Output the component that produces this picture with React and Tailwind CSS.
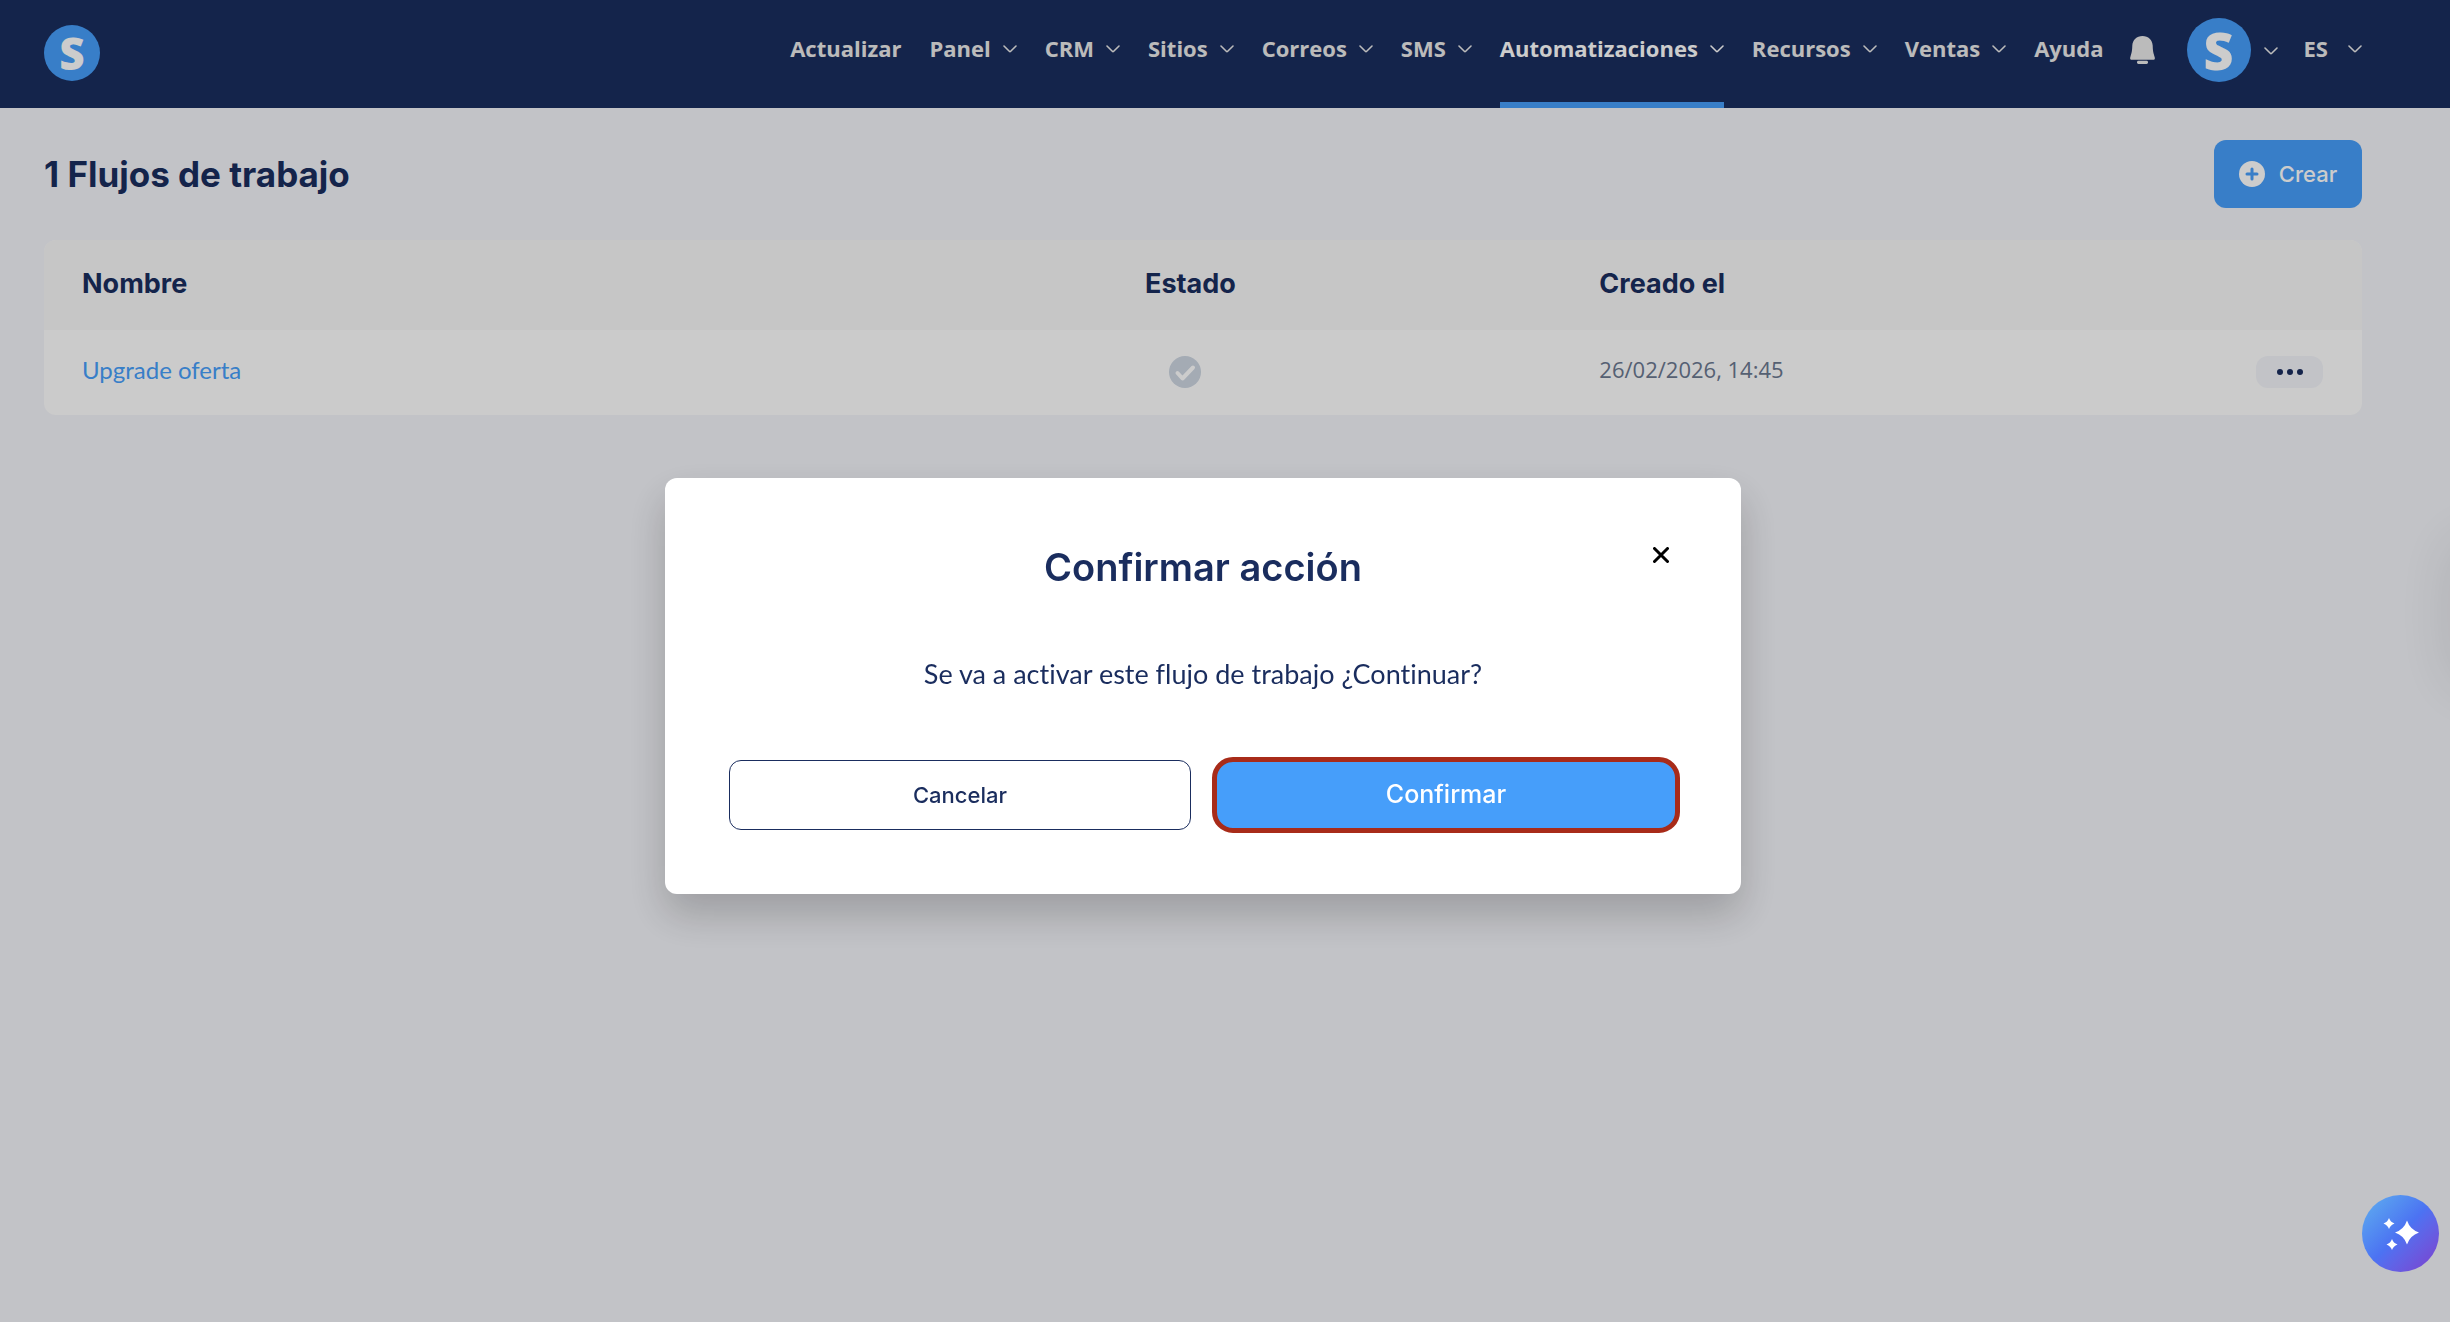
const NAV = [
  { label: 'Actualizar' },
  { label: 'Panel', menu: true },
  { label: 'CRM', menu: true },
  { label: 'Sitios', menu: true },
  { label: 'Correos', menu: true },
  { label: 'SMS', menu: true },
  { label: 'Automatizaciones', menu: true, active: true },
  { label: 'Recursos', menu: true },
  { label: 'Ventas', menu: true },
  { label: 'Ayuda' },
];

function Chevron() {
  return (
    <svg className="mt-0.5 h-2 w-3.5 shrink-0" viewBox="0 0 14 8" fill="none" stroke="currentColor" strokeWidth="1.6" strokeLinecap="round" strokeLinejoin="round" aria-hidden="true">
      <path d="M1 1l5.300 5.300a1 1 0 0 0 1.400 0L13 1" />
    </svg>
  );
}

function NavItem({ label, menu, active }) {
  const state = active ? 'border-[#469efa] text-white' : 'border-transparent text-[#eaeaea]';
  return (
    <li className="flex">
      <a href="#" className={`flex items-center gap-3 border-b-6 pb-1.5 ${state}`}>
        {label}
        {menu && <Chevron />}
      </a>
    </li>
  );
}

function Header() {
  return (
    <header className="flex h-27 justify-between bg-[#1a2d5e] pr-22 pl-11">
      <a href="#" aria-label="Inicio" className="mt-[25px] flex size-14 items-center justify-center rounded-full bg-[#469efa] font-['Open_Sans',sans-serif] text-[44px] leading-none font-extrabold text-white">
        S
      </a>
      <nav className="flex font-['Open_Sans',sans-serif] text-[22px] font-bold">
        <ul className="flex gap-7">
          {NAV.map((item) => (
            <NavItem key={item.label} {...item} />
          ))}
        </ul>
        <button type="button" aria-label="Notificaciones" className="mt-9 ml-[26px] h-7 w-[25px] text-[#eaeaea]">
          <svg className="h-7 w-[25px]" viewBox="0 0 25 28" fill="currentColor" aria-hidden="true">
            <path d="M12.5 0C6.6 0 2.6 4 2.3 9.6C2.1 14.500 2 16 .3 21.200C-.2 22.900.4 23.800 2 23.800H23C24.600 23.800 25.200 22.900 24.700 21.200C23 16 22.900 14.500 22.700 9.600C22.400 4 18.400 0 12.500 0Z" />
            <rect x="7" y="24.800" width="11" height="3.200" rx="1.400" />
          </svg>
        </button>
        <button type="button" aria-label="Cuenta" className="mt-[18px] ml-8 flex h-16 items-center gap-[13px] text-[#eaeaea]">
          <span className="flex size-16 items-center justify-center rounded-full bg-[#469efa] text-[52px] leading-none font-extrabold text-white">
            S
          </span>
          <Chevron />
        </button>
        <button type="button" className="ml-[26px] flex items-center gap-5 pb-3 text-[#eaeaea]">
          ES
          <Chevron />
        </button>
      </nav>
    </header>
  );
}

function Workflows() {
  return (
    <main className="pt-8 pr-22 pl-11">
      <div className="flex items-center justify-between">
        <h1 className="text-[35px] leading-10 font-bold">1 Flujos de trabajo</h1>
        <button type="button" className="flex h-17 w-37 items-center justify-center gap-3.5 rounded-xl bg-[#469efa] text-[22px] font-medium text-white">
          <svg className="size-[26px]" viewBox="0 0 26 26" aria-hidden="true">
            <circle cx="13" cy="13" r="13" fill="#fff" />
            <path d="M13 8v10M8 13h10" stroke="#469efa" strokeWidth="3" strokeLinecap="round" />
          </svg>
          Crear
        </button>
      </div>
      <div className="mt-8 overflow-hidden rounded-xl bg-[#fefefe]">
        <table className="w-full table-fixed text-left">
          <colgroup>
            <col className="w-[47.5%]" />
            <col className="w-[19.6%]" />
            <col />
            <col className="w-32" />
          </colgroup>
          <thead>
            <tr className="h-[90px] bg-[#f8f8f8] text-[27px] font-bold">
              <th className="pb-0.5 pl-[38px]">Nombre</th>
              <th className="pb-0.5">Estado</th>
              <th className="pb-0.5">Creado el</th>
              <th aria-label="Acciones" />
            </tr>
          </thead>
          <tbody>
            <tr className="h-[85px]">
              <td className="pb-1.5 pl-[38px] font-['Lato',sans-serif] text-[24px]">
                <a href="#" className="text-[#469efa]">Upgrade oferta</a>
              </td>
              <td className="pb-0.5 pl-6">
                <svg className="size-8" viewBox="0 0 32 32" role="img" aria-label="Inactivo">
                  <circle cx="16" cy="16" r="16" fill="#cdd6e2" />
                  <path d="M8.500 17l5 5.500L24 11.500" fill="none" stroke="#fff" strokeWidth="4" strokeLinecap="round" strokeLinejoin="round" />
                </svg>
              </td>
              <td className="pb-1.5 font-['Open_Sans',sans-serif] text-[22px] text-[#6b7890]">26/02/2026, 14:45</td>
              <td className="pb-0.5">
                <button type="button" aria-label="Más acciones" className="mr-[39px] ml-auto flex h-8 w-[67px] items-center justify-center gap-1 rounded-xl bg-[#f3f4f9]">
                  <span className="size-[6px] rounded-full bg-[#1a2d5e]" />
                  <span className="size-[6px] rounded-full bg-[#1a2d5e]" />
                  <span className="size-[6px] rounded-full bg-[#1a2d5e]" />
                </button>
              </td>
            </tr>
          </tbody>
        </table>
      </div>
    </main>
  );
}

function ConfirmDialog() {
  return (
    <div className="fixed inset-0 flex items-start justify-center bg-black/20 pt-[478px] pr-11">
      <section role="dialog" aria-modal="true" aria-labelledby="confirm-title" className="relative w-full max-w-[1076px] rounded-xl bg-white p-16 text-center shadow-[0_20px_40px_rgba(0,0,0,0.2)]">
        <button type="button" aria-label="Cerrar" className="absolute top-[69px] right-[72px] text-black">
          <svg className="size-4" viewBox="0 0 16 16" stroke="currentColor" strokeWidth="3" strokeLinecap="round" aria-hidden="true">
            <path d="M1.500 1.500l13 13M14.500 1.500l-13 13" />
          </svg>
        </button>
        <h2 id="confirm-title" className="text-[38px] leading-[50px] font-semibold">Confirmar acción</h2>
        <p className="mt-[62px] font-['Lato',sans-serif] text-[27px] leading-10 [font-variant-ligatures:none]">Se va a activar este flujo de trabajo ¿Continuar?</p>
        <div className="mt-[66px] grid grid-cols-2 gap-6">
          <button type="button" className="h-[70px] rounded-xl border border-[#1a2d5e] text-[22px] font-medium">Cancelar</button>
          <button type="button" className="h-[70px] rounded-[18px] bg-[#469efa] text-[25px] font-medium text-white outline-5 -outline-offset-2 outline-[#a82b19]">Confirmar</button>
        </div>
      </section>
    </div>
  );
}

export default function App() {
  return (
    <div className="min-h-screen overflow-hidden bg-[#f3f4f9] font-['Inter',sans-serif] text-[#1a2d5e]">
      <Header />
      <Workflows />
      <ConfirmDialog />
      <div aria-hidden="true" className="fixed top-[530px] -right-20 h-[150px] w-20 rounded-l-xl shadow-[0_8px_64px_rgba(0,0,0,0.1)]" />
      <button type="button" aria-label="Asistente IA" className="fixed right-[11px] bottom-[50px] flex size-[77px] items-center justify-center rounded-full bg-linear-135 from-[#62b0ee] via-[#4c72f2] to-[#7a3ccc]">
        <svg className="size-9" viewBox="0 0 36 36" fill="#fff" aria-hidden="true">
          <path d="M24 4.500Q27 13.500 36 16.500Q27 19.500 24 28.500Q21 19.500 12 16.500Q21 13.500 24 4.500Z" />
          <path d="M6 2Q7.300 6 11.500 7.500Q7.300 9 6 13Q4.700 9 .5 7.500Q4.700 6 6 2Z" />
          <path d="M9 23Q10.300 27 14.500 28.500Q10.300 30 9 34Q7.700 30 3.500 28.500Q7.700 27 9 23Z" />
        </svg>
      </button>
    </div>
  );
}
